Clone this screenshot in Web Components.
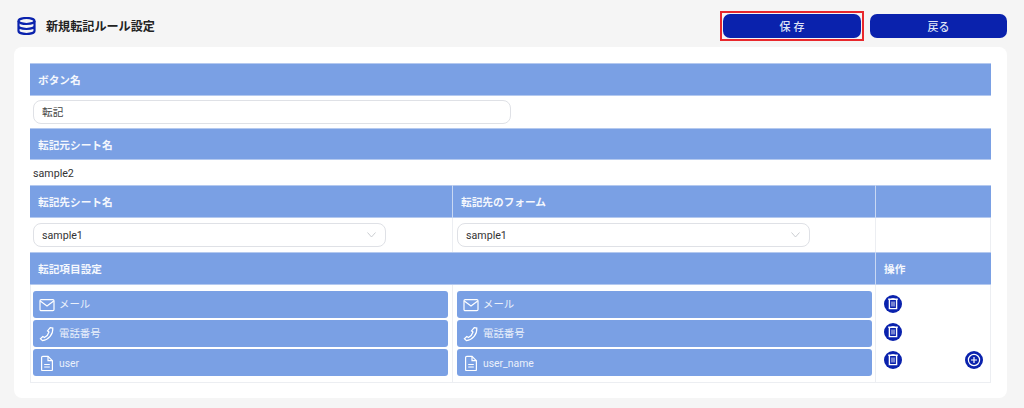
<!DOCTYPE html>
<html lang="ja">
<head>
<meta charset="utf-8">
<title>新規転記ルール設定</title>
<style>
  html, body { margin: 0; height: 100%; background: #f5f5f5; }
  body { font-family: Roboto, "Noto Sans CJK JP", sans-serif; overflow: hidden; }
</style>
</head>
<body>
<rule-page>
  <page-header title="新規転記ルール設定"></page-header>
  <rule-card>
    <rule-row cols="1" height="33">
      <head-cell>ボタン名</head-cell>
    </rule-row>
    <rule-row cols="1" height="32">
      <text-box value="転記" width="478"></text-box>
    </rule-row>
    <rule-row cols="1">
      <head-cell>転記元シート名</head-cell>
    </rule-row>
    <rule-row cols="1" height="25">
      <plain-cell>sample2</plain-cell>
    </rule-row>
    <rule-row cols="3" height="33">
      <head-cell>転記先シート名</head-cell>
      <head-cell>転記先のフォーム</head-cell>
      <head-cell></head-cell>
    </rule-row>
    <rule-row cols="3" height="34" lined>
      <select-box value="sample1"></select-box>
      <select-box value="sample1"></select-box>
      <span></span>
    </rule-row>
    <rule-row cols="2" height="33">
      <head-cell>転記項目設定</head-cell>
      <head-cell>操作</head-cell>
    </rule-row>
    <item-table>
      <field-chip icon="mail" lift>メール</field-chip>
      <field-chip icon="mail" lift>メール</field-chip>
      <field-chip icon="phone" lift>電話番号</field-chip>
      <field-chip icon="phone" lift>電話番号</field-chip>
      <field-chip icon="file">user</field-chip>
      <field-chip icon="file">user_name</field-chip>
      <action-cell></action-cell>
    </item-table>
  </rule-card>
</rule-page>

<script>
  // small helper, every component has its own shadow root
  class Base extends HTMLElement {
    render(html) {
      this.attachShadow({ mode: 'open' }).innerHTML = html;
    }
  }

  const ICONS = {
    mail: `<rect x="1" y="2.600" width="14" height="11" rx="1.200"/><path d="M1.300 4l6.700 5 6.700-5"/>`,
    phone: `<path d="M11.200 1.600l2.600.5c.5 6.200-4.200 11.800-10.300 12.600l-2.100-2 2.400-2.200 1.700 1c2-1 3.800-3 4.500-5.500l-1.500-1.200z"/>`,
    file: `<path d="M2.600 2.500A1.200 1.200 0 0 1 3.800 1.300H9l4.400 4.400v8.800a1.200 1.200 0 0 1-1.200 1.200H3.800a1.200 1.200 0 0 1-1.200-1.200z"/><path d="M9 1.300v4.400h4.400M5.200 9.500h5.600M5.200 12h5.600"/>`
  };

  class RulePage extends Base {
    constructor() {
      super();
      this.render(`
        <style>
          :host { display: block; width: 1024px; height: 408px; padding: 11px 17px 0 14px; box-sizing: border-box; }
        </style>
        <slot></slot>`);
    }
  }

  class PageHeader extends Base {
    constructor() {
      super();
      this.render(`
        <style>
          :host { display: flex; align-items: center; height: 30px; margin-bottom: 6px; }
          svg { margin-left: 3px; width: 19px; height: 18px; flex: none; }
          h1 { margin: 2px 0 0 10px; flex: 1; font-size: 12.100px; font-weight: 700; color: #222; line-height: 28px; }
          .save { border: 2px solid #e8282c; padding: 1px; display: flex; margin-right: 6px; }
          button {
            width: 138px; height: 24px; border: 0; border-radius: 7px; background: #0a22ad; color: #dfe4f6;
            font: 500 11px Roboto, "Noto Sans CJK JP", sans-serif; padding: 0;
          }
          .keep { letter-spacing: 3px; padding-left: 3px; }
          .back { width: 137px; }
        </style>
        <svg viewBox="0 0 19 18" fill="none" stroke="#0a22ad" stroke-width="2.200">
          <ellipse cx="9.500" cy="4" rx="8" ry="3"/>
          <path d="M1.500 4v10c0 1.700 3.600 3 8 3s8-1.300 8-3V4M1.500 9c0 1.700 3.600 3 8 3s8-1.300 8-3"/>
        </svg>
        <h1>${this.getAttribute('title')}</h1>
        <span class="save"><button class="keep">保存</button></span>
        <button class="back">戻る</button>`);
    }
  }

  class RuleCard extends Base {
    constructor() {
      super();
      this.render(`
        <style>
          :host { display: block; height: 351px; background: #fff; border-radius: 8px; padding: 16px 16px 0; box-sizing: border-box; }
        </style>
        <slot></slot>`);
    }
  }

  class RuleRow extends Base {
    constructor() {
      super();
      const cols = {
        1: '1fr',
        2: '846px 1fr',
        3: '423px 423px 1fr'
      }[this.getAttribute('cols')];
      const h = this.getAttribute('height') || 32;
      this.render(`
        <style>
          :host { display: grid; grid-template-columns: ${cols}; height: ${h}px; }
          :host([lined]) ::slotted(*) { box-shadow: inset -1px 0 #eceef2; }
        </style>
        <slot></slot>`);
    }
  }

  class HeadCell extends Base {
    constructor() {
      super();
      this.render(`
        <style>
          :host {
            display: flex; align-items: center; padding-left: 8px; background: #7aa0e4; color: #f4f7fd;
            font-size: 10.670px; font-weight: 700; box-sizing: border-box;
            border-right: 1px solid #c9d8f3;
            box-shadow: inset 0 1px #b4c9ef, inset 0 -1px #b4c9ef;
          }
          :host(:last-child) { border-right: 0; }
        </style>
        <slot></slot>`);
    }
  }

  class PlainCell extends Base {
    constructor() {
      super();
      this.render(`
        <style>
          :host { display: flex; align-items: center; padding: 1px 0 0 3px; font-size: 10.670px; color: #333; }
        </style>
        <slot></slot>`);
    }
  }

  class TextBox extends Base {
    constructor() {
      super();
      this.render(`
        <style>
          :host { display: flex; align-items: center; padding: 0 0 0 3px; }
          div {
            width: ${this.getAttribute('width')}px; height: 24px; box-sizing: border-box; border: 1px solid #dfe1e6;
            border-radius: 8px; padding-left: 8px; line-height: 24px; font-size: 10.670px; color: #444;
          }
        </style>
        <div>${this.getAttribute('value')}</div>`);
    }
  }

  class SelectBox extends Base {
    constructor() {
      super();
      this.render(`
        <style>
          :host { display: flex; align-items: center; padding-left: 3px; }
          :host(:nth-of-type(2)) { padding-left: 4px; }
          div {
            width: 353px; height: 24px; box-sizing: border-box; border: 1px solid #dfe1e6; border-radius: 8px;
            padding: 0 8px; display: flex; align-items: center; justify-content: space-between;
            font-size: 10.670px; color: #333;
          }
          svg { width: 9px; height: 6px; margin-right: 1px; }
        </style>
        <div>${this.getAttribute('value')}
          <svg viewBox="0 0 9 6" fill="none" stroke="#c4c7cc" stroke-width="0.900"><path d="M.5.500l4 4.500 4-4.500"/></svg>
        </div>`);
    }
  }

  class ItemTable extends Base {
    constructor() {
      super();
      this.render(`
        <style>
          :host {
            display: grid; grid-template-columns: 422px 423px 1fr; grid-auto-rows: 29px;
            height: 98px; width: 961px; padding-top: 6px; box-sizing: border-box;
            border: 1px solid #eceef2; border-top: 0;
            background:
              linear-gradient(#eceef2, #eceef2) 421px 0 / 1px 100% no-repeat,
              linear-gradient(#eceef2, #eceef2) 844px 0 / 1px 100% no-repeat;
          }
          ::slotted(action-cell) { grid-column: 3; grid-row: 1 / span 3; }
        </style>
        <slot></slot>`);
    }
  }

  class FieldChip extends Base {
    constructor() {
      super();
      this.render(`
        <style>
          :host {
            display: flex; align-items: center; width: 415px; height: 27px; box-sizing: border-box; margin-left: 2px;
            background: #7aa0e4; border-radius: 3px; color: #eaf0fb; font-size: 10.400px; padding-left: 6px;
          }
          :host(:nth-of-type(even)) { margin-left: 4px; }
          svg { width: 16px; height: 16px; margin-right: 4px; flex: none; fill: none; stroke: #fff; stroke-width: 1.200; }
          span { padding-top: 2px; }
          :host([lift]) span { padding-top: 0; padding-bottom: 2px; }
        </style>
        <svg viewBox="0 0 16 16">${ICONS[this.getAttribute('icon')]}</svg>
        <span><slot></slot></span>`);
    }
  }

  class ActionCell extends Base {
    constructor() {
      super();
      const trash = `
        <span class="round">
          <svg viewBox="0 0 18 18" fill="none" stroke="#fff" stroke-width="1.200">
            <path d="M5.400 4.600v9h7.200v-9M4.200 4.300h9.600" stroke-width="1.400"/>
            <path d="M7.400 3.700h3.200M8 6.500v5M10 6.500v5" stroke-width="0.900"/>
          </svg>
        </span>`;
      this.render(`
        <style>
          :host { display: grid; grid-template-columns: 18px 18px; justify-content: space-between; grid-auto-rows: 18px; row-gap: 10px; padding: 4px 7px 0 8px; }
          .round { width: 18px; height: 18px; border-radius: 50%; background: #0a22ad; display: block; }
          .add { grid-column: 2; grid-row: 3; }
          svg { display: block; width: 18px; height: 18px; }
        </style>
        ${trash}<span></span>${trash}<span></span>${trash}
        <span class="round add">
          <svg viewBox="0 0 18 18" fill="none" stroke="#fff" stroke-width="1.200">
            <circle cx="9" cy="9" r="5.600"/><path d="M9 6v6M6 9h6"/>
          </svg>
        </span>`);
    }
  }

  customElements.define('rule-page', RulePage);
  customElements.define('page-header', PageHeader);
  customElements.define('rule-card', RuleCard);
  customElements.define('rule-row', RuleRow);
  customElements.define('head-cell', HeadCell);
  customElements.define('plain-cell', PlainCell);
  customElements.define('text-box', TextBox);
  customElements.define('select-box', SelectBox);
  customElements.define('item-table', ItemTable);
  customElements.define('field-chip', FieldChip);
  customElements.define('action-cell', ActionCell);
</script>
</body>
</html>
